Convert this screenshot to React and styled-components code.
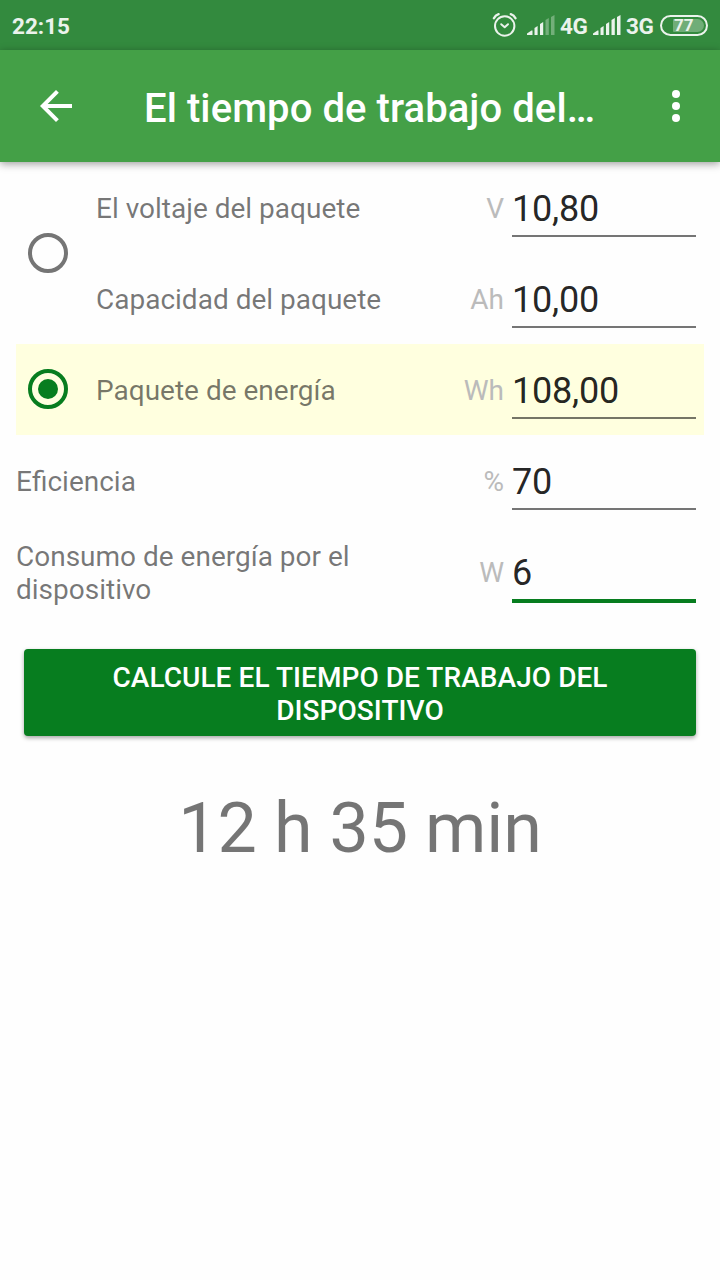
import React from "react"
import styled, { createGlobalStyle } from "styled-components"

const GlobalStyle = createGlobalStyle`
  * {
    box-sizing: border-box;
  }

  body {
    margin: 0;
    background: #fefefe;
    font-family: Roboto, "Noto Sans", sans-serif;
  }
`

const Screen = styled.div`
  width: 720px;
  height: 1280px;
  overflow: hidden;
`

const StatusBar = styled.div`
  height: 50px;
  padding: 0 12px;
  display: flex;
  align-items: center;
  justify-content: space-between;
  background: #338a3e;
  color: #ebf3ec;
  font-size: 22.5px;
  line-height: 28px;
  font-weight: 700;
`

const Time = styled.span`
  padding-top: 1px;
`

const StatusIcons = styled.div`
  display: flex;
  align-items: center;
`

const Network = styled.span`
  width: ${props => props.width}px;
  padding-top: 1px;
  letter-spacing: -0.5px;
  white-space: nowrap;
`

const Battery = styled.div`
  width: 48px;
  height: 21px;
  padding: 2px;
  display: flex;
  border: 2px solid #ebf3ec;
  border-radius: 11px;
`

const BatteryLevel = styled.div`
  width: 31px;
  height: 13px;
  margin-left: auto;
  padding-left: 1px;
  border-radius: 1px 7px 7px 1px;
  background: #70ad78;
  font-size: 17px;
  line-height: 12px;
`

const Toolbar = styled.header`
  height: 112px;
  padding: 0 20px 0 32px;
  display: flex;
  align-items: center;
  background: #44a047;
  color: #fff;
  box-shadow: 0 2px 8px rgba(0, 0, 0, 0.38);
`

const IconButton = styled.div`
  width: 48px;
  height: 48px;
`

const Title = styled.h1`
  flex: 1;
  margin: 0;
  padding: 6px 0 0 64px;
  font-size: 40px;
  line-height: 48px;
  font-weight: 500;
  letter-spacing: 0.08px;
  white-space: nowrap;
`

const Form = styled.main`
  padding: 0 16px;
`

const Option = styled.div`
  display: flex;
  align-items: center;
  background: ${props => (props.$selected ? "#ffffdf" : "transparent")};
`

const Radio = styled.div`
  width: 40px;
  height: 40px;
  margin: 0 28px 1px 12px;
  display: flex;
  flex-shrink: 0;
  align-items: center;
  justify-content: center;
  border: 4px solid ${props => (props.$selected ? "#077d1f" : "#757575")};
  border-radius: 50%;
`

const RadioDot = styled.div`
  width: 20px;
  height: 20px;
  border-radius: 50%;
  background: #077d1f;
`

const Rows = styled.div`
  flex: 1;
`

const Row = styled.div`
  height: 91px;
  padding-right: 8px;
  display: flex;
`

const Label = styled.div`
  flex: 1;
  padding-top: 2px;
  align-self: center;
  color: rgba(0, 0, 0, 0.54);
  font-size: 28px;
  line-height: 33px;
`

const Unit = styled.div`
  width: 104px;
  padding: 2px 8px 0 0;
  align-self: center;
  color: #bbb;
  font-size: 28px;
  line-height: 33px;
  text-align: right;
`

const Value = styled.div`
  width: 184px;
  margin-top: 26px;
  padding-bottom: 5px;
  align-self: flex-start;
  border-bottom: ${props => (props.$focused ? "4px solid #077d1f" : "2px solid rgba(0, 0, 0, 0.54)")};
  color: rgba(0, 0, 0, 0.87);
  font-size: 36px;
  line-height: 42px;
  letter-spacing: -0.2px;
`

const Button = styled.button`
  width: 672px;
  height: 87px;
  margin: 32px 8px 0;
  padding: 12px 80px 9px;
  display: block;
  border: 0;
  border-radius: 4px;
  background: #077d1f;
  box-shadow: 0 2px 4px rgba(0, 0, 0, 0.35);
  color: #fff;
  font-family: inherit;
  font-size: 28px;
  line-height: 33px;
  font-weight: 500;
  letter-spacing: 0.06px;
  text-transform: uppercase;
`

const Result = styled.div`
  margin-top: 50px;
  color: rgba(0, 0, 0, 0.54);
  font-size: 70px;
  line-height: 84px;
  letter-spacing: -0.15px;
  text-align: center;
`

const AlarmIcon = () => (
  <svg width="26" height="26" viewBox="0 0 26 26" fill="none" stroke="#ebf3ec" strokeLinecap="round">
    <circle cx="12.7" cy="14" r="9.7" strokeWidth="2" />
    <path d="M9.2 12.2L12.7 15.2L16 12.2" strokeWidth="2" strokeLinejoin="round" />
    <path d="M1.9 6.2Q3.4 3.2 6.6 2.2M18.8 2.2Q22 3.2 23.5 6.2" strokeWidth="2.4" />
  </svg>
)

const bars = [
  "M0 20V18.5L4.5 15.5H5.5V20Z",
  "M7.5 20V13L10.6 11V20Z",
  "M13 20V9L16.2 7V20Z",
  "M18.5 20V5L21.8 3V20Z",
  "M24 20V2L27.5 0V20Z",
]

const SignalIcon = ({ level }) => (
  <svg width="28" height="20" viewBox="0 0 28 20" fill="#ebf3ec">
    {bars.map((bar, index) => (<path key={bar} d={bar} opacity={index < level ? 1 : 0.35} />))}
  </svg>
)

const SignalBox = styled.div`
  height: 20px;
  margin-right: 5px;
  display: flex;
`

const AlarmBox = styled.div`
  height: 26px;
  margin-right: 9px;
  display: flex;
`

const Field = ({ label, unit, value, focused }) => (
  <Row>
    <Label>{label}</Label>
    <Unit>{unit}</Unit>
    <Value $focused={focused}>{value}</Value>
  </Row>
)

const App = () => (
  <Screen>
    <GlobalStyle />
    <StatusBar>
      <Time>22:15</Time>
      <StatusIcons>
        <AlarmBox><AlarmIcon /></AlarmBox>
        <SignalBox><SignalIcon level={3} /></SignalBox>
        <Network width={33}>4G</Network>
        <SignalBox><SignalIcon level={5} /></SignalBox>
        <Network width={34}>3G</Network>
        <Battery>
          <BatteryLevel>77</BatteryLevel>
        </Battery>
      </StatusIcons>
    </StatusBar>
    <Toolbar>
      <IconButton>
        <svg width="48" height="48" viewBox="0 0 24 24" fill="#fff">
          <path d="M20 11H7.83l5.59-5.59L12 4l-8 8 8 8 1.41-1.41L7.83 13H20v-2z" />
        </svg>
      </IconButton>
      <Title>El tiempo de trabajo del…</Title>
      <IconButton>
        <svg width="48" height="48" viewBox="0 0 24 24" fill="#fff">
          <circle cx="12" cy="6" r="2" />
          <circle cx="12" cy="12" r="2" />
          <circle cx="12" cy="18" r="2" />
        </svg>
      </IconButton>
    </Toolbar>
    <Form>
      <Option>
        <Radio />
        <Rows>
          <Field label="El voltaje del paquete" unit="V" value="10,80" />
          <Field label="Capacidad del paquete" unit="Ah" value="10,00" />
        </Rows>
      </Option>
      <Option $selected>
        <Radio $selected>
          <RadioDot />
        </Radio>
        <Rows>
          <Field label="Paquete de energía" unit="Wh" value="108,00" />
        </Rows>
      </Option>
      <Field label="Eficiencia" unit="%" value="70" />
      <Field label="Consumo de energía por el dispositivo" unit="W" value="6" focused />
      <Button>Calcule el tiempo de trabajo del dispositivo</Button>
      <Result>12 h 35 min</Result>
    </Form>
  </Screen>
)

export default App
